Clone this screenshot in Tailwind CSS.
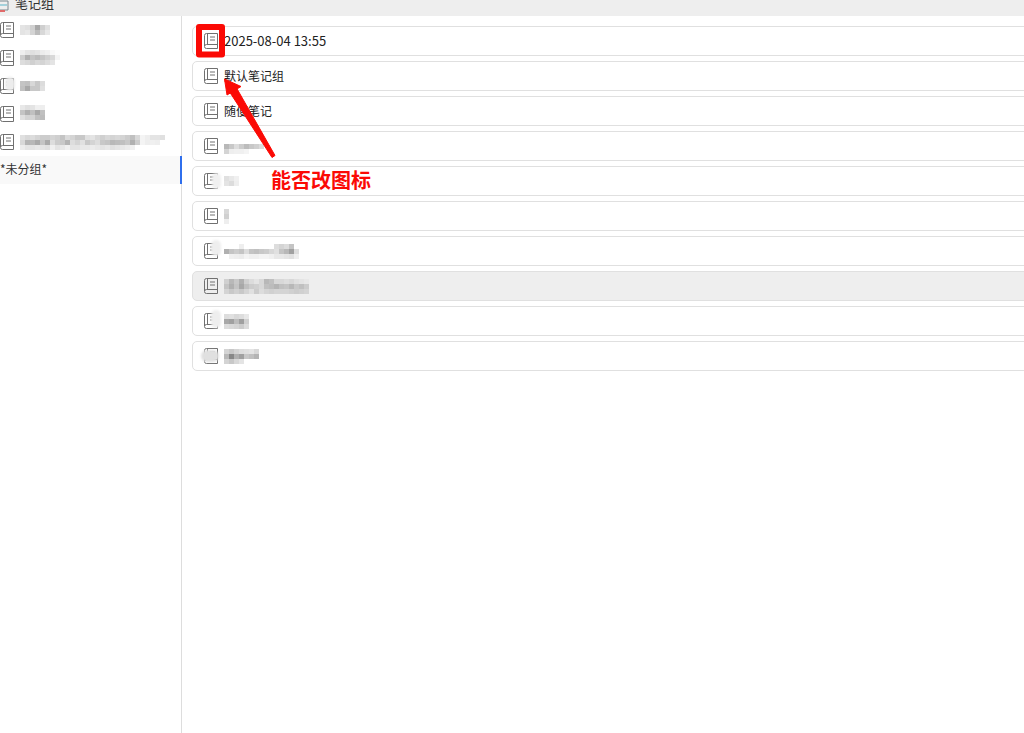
<!DOCTYPE html>
<html lang="zh">
<head>
<meta charset="utf-8">
<script src="https://cdn.jsdelivr.net/npm/@tailwindcss/browser@4"></script>
</head>
<body class="bg-white">
<div class="relative w-[1024px] h-[733px] overflow-hidden flex flex-col bg-white text-[12px] text-[#333] font-['Noto_Sans_CJK_SC','Noto_Sans',sans-serif]">

  <header class="h-4 shrink-0 bg-[#eeeeee] flex items-end overflow-hidden">
    <svg class="w-[9px] h-3 shrink-0 mb-1" viewBox="0 0 9 12" fill="none"><path d="M0 1h8v9H0" stroke="#7a8a90"/><path d="M0 5h7" stroke="#58b5c9"/><path d="M0 11h5" stroke="#e06a6a" stroke-width="2"/></svg>
    <span class="ml-[6px] leading-[20px] h-5 text-[13px] -translate-y-[3px]">笔记组</span>
  </header>

  <div class="flex-1 flex min-h-0">
    <aside class="w-[182px] shrink-0 border-r border-[#dddddd] flex flex-col">
      <div class="h-7 flex items-center gap-[6px]">
        <svg class="w-[14px] h-4 shrink-0" viewBox="0 0 14 16" fill="none" stroke="#707070"><path d="M.5 13V2.500a2 2 0 0 1 2-2h11v15h-11a2 2 0 0 1-2-2 2 2 0 0 1 2-2h11M3.500.5v10.500M6 4h5M6 7h5"/></svg>
        <div class="flex flex-col">
          <div class="flex h-[5px]"><i class="w-[5px] bg-[#e4e4e4]"></i><i class="w-[5px] bg-[#e0e0e0]"></i><i class="w-[5px] bg-[#d0d0d0]"></i><i class="w-[5px] bg-[#a8a8a8]"></i><i class="w-[5px] bg-[#cfcfcf]"></i><i class="w-[5px] bg-[#e0e0e0]"></i></div>
          <div class="flex h-[5px]"><i class="w-[5px] bg-[#e4e4e4]"></i><i class="w-[5px] bg-[#e8e8e8]"></i><i class="w-[5px] bg-[#d4d4d4]"></i><i class="w-[5px] bg-[#bcbcbc]"></i><i class="w-[5px] bg-[#d8d8d8]"></i><i class="w-[5px] bg-[#e8e8e8]"></i></div>
        </div>
      </div>
      <div class="h-7 flex items-center gap-[6px]">
        <svg class="w-[14px] h-4 shrink-0" viewBox="0 0 14 16" fill="none" stroke="#707070"><path d="M.5 13V2.500a2 2 0 0 1 2-2h11v15h-11a2 2 0 0 1-2-2 2 2 0 0 1 2-2h11M3.500.5v10.500M6 4h5M6 7h5"/></svg>
        <div class="flex flex-col -translate-y-px">
          <div class="flex h-[5px]"><i class="w-[5px] bg-[#eeeeee]"></i><i class="w-[5px] bg-[#e4e4e4]"></i><i class="w-[5px] bg-[#e0e0e0]"></i><i class="w-[5px] bg-[#e4e4e4]"></i><i class="w-[5px] bg-[#ececec]"></i><i class="w-[5px] bg-[#f0f0f0]"></i><i class="w-[5px] bg-[#f8f8f8]"></i><i class="w-[5px] bg-[#fcfcfc]"></i></div>
          <div class="flex h-[5px]"><i class="w-[5px] bg-[#cdcdcd]"></i><i class="w-[5px] bg-[#b0b0b0]"></i><i class="w-[5px] bg-[#c4c4c4]"></i><i class="w-[5px] bg-[#bcbcbc]"></i><i class="w-[5px] bg-[#c6c6c6]"></i><i class="w-[5px] bg-[#d0d0d0]"></i><i class="w-[5px] bg-[#d8d8d8]"></i><i class="w-[5px] bg-[#f4f4f4]"></i></div>
          <div class="flex h-[5px]"><i class="w-[5px] bg-[#dddddd]"></i><i class="w-[5px] bg-[#d8d8d8]"></i><i class="w-[5px] bg-[#d0d0d0]"></i><i class="w-[5px] bg-[#d8d8d8]"></i><i class="w-[5px] bg-[#d4d4d4]"></i><i class="w-[5px] bg-[#dcdcdc]"></i><i class="w-[5px] bg-[#e4e4e4]"></i></div>
        </div>
      </div>
      <div class="h-7 flex items-center gap-[6px] relative">
        <svg class="w-[14px] h-4 shrink-0" viewBox="0 0 14 16" fill="none" stroke="#707070"><path d="M.5 13V2.500a2 2 0 0 1 2-2h11v15h-11a2 2 0 0 1-2-2 2 2 0 0 1 2-2h11M3.500.5v10.500M6 4h5M6 7h5"/></svg>
        <div class="absolute left-[5px] top-[5px] w-[10px] h-[14px] bg-[#ececec] rounded-full blur-[1px]"></div>
        <div class="flex flex-col">
          <div class="flex h-[5px]"><i class="w-[5px] bg-[#c4c4c4]"></i><i class="w-[5px] bg-[#c0c0c0]"></i><i class="w-[5px] bg-[#d8d8d8]"></i><i class="w-[5px] bg-[#c8c8c8]"></i><i class="w-[5px] bg-[#dcdcdc]"></i></div>
          <div class="flex h-[5px]"><i class="w-[5px] bg-[#c0c0c0]"></i><i class="w-[5px] bg-[#a8a8a8]"></i><i class="w-[5px] bg-[#c8c8c8]"></i><i class="w-[5px] bg-[#c8c8c8]"></i><i class="w-[5px] bg-[#e0e0e0]"></i></div>
        </div>
      </div>
      <div class="h-7 flex items-center gap-[6px]">
        <svg class="w-[14px] h-4 shrink-0" viewBox="0 0 14 16" fill="none" stroke="#707070"><path d="M.5 13V2.500a2 2 0 0 1 2-2h11v15h-11a2 2 0 0 1-2-2 2 2 0 0 1 2-2h11M3.500.5v10.500M6 4h5M6 7h5"/></svg>
        <div class="flex flex-col -translate-y-[2px]">
          <div class="flex h-[5px]"><i class="w-[5px] bg-[#e8e8e8]"></i><i class="w-[5px] bg-[#e0e0e0]"></i><i class="w-[5px] bg-[#e4e4e4]"></i><i class="w-[5px] bg-[#f0f0f0]"></i><i class="w-[5px] bg-[#eeeeee]"></i></div>
          <div class="flex h-[5px]"><i class="w-[5px] bg-[#c4c4c4]"></i><i class="w-[5px] bg-[#b0b0b0]"></i><i class="w-[5px] bg-[#c0c0c0]"></i><i class="w-[5px] bg-[#a8a8a8]"></i><i class="w-[5px] bg-[#c0c0c0]"></i></div>
          <div class="flex h-[5px]"><i class="w-[5px] bg-[#e0e0e0]"></i><i class="w-[5px] bg-[#d4d4d4]"></i><i class="w-[5px] bg-[#d4d4d4]"></i><i class="w-[5px] bg-[#c0c0c0]"></i><i class="w-[5px] bg-[#bcbcbc]"></i></div>
        </div>
      </div>
      <div class="h-7 flex items-center gap-[6px]">
        <svg class="w-[14px] h-4 shrink-0" viewBox="0 0 14 16" fill="none" stroke="#707070"><path d="M.5 13V2.500a2 2 0 0 1 2-2h11v15h-11a2 2 0 0 1-2-2 2 2 0 0 1 2-2h11M3.500.5v10.500M6 4h5M6 7h5"/></svg>
        <div class="flex flex-col">
          <div class="flex h-[5px]"><i class="w-[5px] bg-[#e0e0e0]"></i><i class="w-[5px] bg-[#d8d8d8]"></i><i class="w-[5px] bg-[#dcdcdc]"></i><i class="w-[5px] bg-[#d4d4d4]"></i><i class="w-[5px] bg-[#cccccc]"></i><i class="w-[5px] bg-[#cccccc]"></i><i class="w-[5px] bg-[#d4d4d4]"></i><i class="w-[5px] bg-[#cfcfcf]"></i><i class="w-[5px] bg-[#c4c4c4]"></i><i class="w-[5px] bg-[#dadada]"></i><i class="w-[5px] bg-[#d4d4d4]"></i><i class="w-[5px] bg-[#c8c8c8]"></i><i class="w-[5px] bg-[#c8c8c8]"></i><i class="w-[5px] bg-[#e0e0e0]"></i><i class="w-[5px] bg-[#e4e4e4]"></i><i class="w-[5px] bg-[#d8d8d8]"></i><i class="w-[5px] bg-[#d0d0d0]"></i><i class="w-[5px] bg-[#d8d8d8]"></i><i class="w-[5px] bg-[#d4d4d4]"></i><i class="w-[5px] bg-[#d8d8d8]"></i><i class="w-[5px] bg-[#d4d4d4]"></i><i class="w-[5px] bg-[#cccccc]"></i><i class="w-[5px] bg-[#c0c0c0]"></i><i class="w-[5px] bg-[#d8d8d8]"></i><i class="w-[5px] bg-[#f4f4f4]"></i><i class="w-[5px] bg-[#eeeeee]"></i><i class="w-[5px] bg-[#e4e4e4]"></i><i class="w-[5px] bg-[#e4e4e4]"></i><i class="w-[5px] bg-[#e0e0e0]"></i></div>
          <div class="flex h-[5px]"><i class="w-[5px] bg-[#d8d8d8]"></i><i class="w-[5px] bg-[#b4b4b4]"></i><i class="w-[5px] bg-[#b8b8b8]"></i><i class="w-[5px] bg-[#aaaaaa]"></i><i class="w-[5px] bg-[#c4c4c4]"></i><i class="w-[5px] bg-[#aaaaaa]"></i><i class="w-[5px] bg-[#dddddd]"></i><i class="w-[5px] bg-[#cccccc]"></i><i class="w-[5px] bg-[#c8c8c8]"></i><i class="w-[5px] bg-[#b4b4b4]"></i><i class="w-[5px] bg-[#dddddd]"></i><i class="w-[5px] bg-[#d4d4d4]"></i><i class="w-[5px] bg-[#e0e0e0]"></i><i class="w-[5px] bg-[#c8c8c8]"></i><i class="w-[5px] bg-[#d4d4d4]"></i><i class="w-[5px] bg-[#dddddd]"></i><i class="w-[5px] bg-[#c8c8c8]"></i><i class="w-[5px] bg-[#c4c4c4]"></i><i class="w-[5px] bg-[#b8b8b8]"></i><i class="w-[5px] bg-[#bcbcbc]"></i><i class="w-[5px] bg-[#c0c0c0]"></i><i class="w-[5px] bg-[#c8c8c8]"></i><i class="w-[5px] bg-[#b0b0b0]"></i><i class="w-[5px] bg-[#cccccc]"></i><i class="w-[5px] bg-[#f4f4f4]"></i><i class="w-[5px] bg-[#eeeeee]"></i><i class="w-[5px] bg-[#f0f0f0]"></i><i class="w-[5px] bg-[#eeeeee]"></i></div>
          <div class="flex h-[5px]"><i class="w-[5px] bg-[#ececec]"></i><i class="w-[5px] bg-[#e4e4e4]"></i><i class="w-[5px] bg-[#e4e4e4]"></i><i class="w-[5px] bg-[#e8e8e8]"></i><i class="w-[5px] bg-[#e4e4e4]"></i><i class="w-[5px] bg-[#e0e0e0]"></i><i class="w-[5px] bg-[#f0f0f0]"></i><i class="w-[5px] bg-[#e4e4e4]"></i><i class="w-[5px] bg-[#e8e8e8]"></i><i class="w-[5px] bg-[#f0f0f0]"></i><i class="w-[5px] bg-[#e4e4e4]"></i><i class="w-[5px] bg-[#e4e4e4]"></i><i class="w-[5px] bg-[#e8e8e8]"></i><i class="w-[5px] bg-[#e8e8e8]"></i><i class="w-[5px] bg-[#ececec]"></i><i class="w-[5px] bg-[#e8e8e8]"></i><i class="w-[5px] bg-[#e4e4e4]"></i><i class="w-[5px] bg-[#e8e8e8]"></i><i class="w-[5px] bg-[#e0e0e0]"></i><i class="w-[5px] bg-[#e4e4e4]"></i><i class="w-[5px] bg-[#e8e8e8]"></i><i class="w-[5px] bg-[#ececec]"></i><i class="w-[5px] bg-[#f0f0f0]"></i></div>
        </div>
      </div>
      <div class="h-7 flex items-center bg-[#f9f9f9] border-r-2 border-[#2f6fed] -mr-px -translate-y-0"><span class="-translate-y-px">*未分组*</span></div>
    </aside>

    <main class="flex-1 min-w-0 pt-[10px] pl-[10px] flex flex-col gap-[5px]">
      <div class="h-[30px] w-[900px] shrink-0 border border-[#e0e0e0] rounded-[5px] flex items-center pl-[11px] gap-[6px] text-[#222]">
        <svg class="w-[14px] h-4 shrink-0" viewBox="0 0 14 16" fill="none" stroke="#707070"><path d="M.5 13V2.500a2 2 0 0 1 2-2h11v15h-11a2 2 0 0 1-2-2 2 2 0 0 1 2-2h11M3.500.5v10.500M6 4h5M6 7h5"/></svg>
        <span class="text-[13px]">2025-08-04 13:55</span>
      </div>
      <div class="h-[30px] w-[900px] shrink-0 border border-[#e0e0e0] rounded-[5px] flex items-center pl-[11px] gap-[6px] text-[#222]">
        <svg class="w-[14px] h-4 shrink-0" viewBox="0 0 14 16" fill="none" stroke="#707070"><path d="M.5 13V2.500a2 2 0 0 1 2-2h11v15h-11a2 2 0 0 1-2-2 2 2 0 0 1 2-2h11M3.500.5v10.500M6 4h5M6 7h5"/></svg>
        <span>默认笔记组</span>
      </div>
      <div class="h-[30px] w-[900px] shrink-0 border border-[#e0e0e0] rounded-[5px] flex items-center pl-[11px] gap-[6px] text-[#222]">
        <svg class="w-[14px] h-4 shrink-0" viewBox="0 0 14 16" fill="none" stroke="#707070"><path d="M.5 13V2.500a2 2 0 0 1 2-2h11v15h-11a2 2 0 0 1-2-2 2 2 0 0 1 2-2h11M3.500.5v10.500M6 4h5M6 7h5"/></svg>
        <span>随便笔记</span>
      </div>
      <div class="h-[30px] w-[900px] shrink-0 border border-[#e0e0e0] rounded-[5px] flex items-center pl-[11px] gap-[6px]">
        <svg class="w-[14px] h-4 shrink-0" viewBox="0 0 14 16" fill="none" stroke="#707070"><path d="M.5 13V2.500a2 2 0 0 1 2-2h11v15h-11a2 2 0 0 1-2-2 2 2 0 0 1 2-2h11M3.500.5v10.500M6 4h5M6 7h5"/></svg>
        <div class="flex flex-col translate-y-[3px]">
          <div class="flex h-[5px]"><i class="w-[5px] bg-[#b8b8b8]"></i><i class="w-[5px] bg-[#c8c8c8]"></i><i class="w-[5px] bg-[#dddddd]"></i><i class="w-[5px] bg-[#cccccc]"></i><i class="w-[5px] bg-[#bcbcbc]"></i><i class="w-[5px] bg-[#c8c8c8]"></i><i class="w-[5px] bg-[#d0d0d0]"></i><i class="w-[5px] bg-[#dcdcdc]"></i></div>
          <div class="flex h-[5px]"><i class="w-[5px] bg-[#d4d4d4]"></i><i class="w-[5px] bg-[#eeeeee]"></i><i class="w-[5px] bg-[#f0f0f0]"></i><i class="w-[5px] bg-[#f0f0f0]"></i><i class="w-[5px] bg-[#f4f4f4]"></i></div>
        </div>
      </div>
      <div class="h-[30px] w-[900px] shrink-0 border border-[#e0e0e0] rounded-[5px] flex items-center pl-[11px] gap-[6px] relative">
        <svg class="w-[14px] h-4 shrink-0" viewBox="0 0 14 16" fill="none" stroke="#707070"><path d="M.5 13V2.500a2 2 0 0 1 2-2h11v15h-11a2 2 0 0 1-2-2 2 2 0 0 1 2-2h11M3.500.5v10.500M6 4h5M6 7h5"/></svg>
        <div class="absolute left-[19px] top-[6px] w-[9px] h-4 bg-[#f0f0f0] rounded-full blur-[1px]"></div>
        <div class="flex flex-col">
          <div class="flex h-[5px]"><i class="w-[5px] bg-[#e0e0e0]"></i><i class="w-[5px] bg-[#e8e8e8]"></i><i class="w-[5px] bg-[#f0f0f0]"></i></div>
          <div class="flex h-[5px]"><i class="w-[5px] bg-[#e4e4e4]"></i><i class="w-[5px] bg-[#dcdcdc]"></i><i class="w-[5px] bg-[#eeeeee]"></i></div>
        </div>
      </div>
      <div class="h-[30px] w-[900px] shrink-0 border border-[#e0e0e0] rounded-[5px] flex items-center pl-[11px] gap-[6px]">
        <svg class="w-[14px] h-4 shrink-0" viewBox="0 0 14 16" fill="none" stroke="#707070"><path d="M.5 13V2.500a2 2 0 0 1 2-2h11v15h-11a2 2 0 0 1-2-2 2 2 0 0 1 2-2h11M3.500.5v10.500M6 4h5M6 7h5"/></svg>
        <div class="flex flex-col">
          <div class="w-[5px] h-[5px] bg-[#d8d8d8]"></div>
          <div class="w-[5px] h-[5px] bg-[#d0d0d0]"></div>
          <div class="w-[5px] h-[5px] bg-[#eeeeee]"></div>
        </div>
      </div>
      <div class="h-[30px] w-[900px] shrink-0 border border-[#e0e0e0] rounded-[5px] flex items-center pl-[11px] gap-[6px] relative">
        <svg class="w-[14px] h-4 shrink-0" viewBox="0 0 14 16" fill="none" stroke="#707070"><path d="M.5 13V2.500a2 2 0 0 1 2-2h11v15h-11a2 2 0 0 1-2-2 2 2 0 0 1 2-2h11M3.500.5v10.500M6 4h5M6 7h5"/></svg>
        <div class="absolute left-[18px] top-[3px] w-[10px] h-4 bg-[#eeeeee] rounded-full blur-[1px]"></div>
        <div class="flex flex-col">
          <div class="flex h-[5px]"><i class="w-[5px]"></i><i class="w-[5px]"></i><i class="w-[5px]"></i><i class="w-[5px] bg-[#eeeeee]"></i><i class="w-[5px]"></i><i class="w-[5px]"></i><i class="w-[5px]"></i><i class="w-[5px]"></i><i class="w-[5px]"></i><i class="w-[5px]"></i><i class="w-[5px] bg-[#dddddd]"></i><i class="w-[5px] bg-[#d4d4d4]"></i><i class="w-[5px] bg-[#dcdcdc]"></i><i class="w-[5px] bg-[#c4c4c4]"></i></div>
          <div class="flex h-[5px]"><i class="w-[5px] bg-[#b0b0b0]"></i><i class="w-[5px] bg-[#c4c4c4]"></i><i class="w-[5px] bg-[#cccccc]"></i><i class="w-[5px] bg-[#c4c4c4]"></i><i class="w-[5px] bg-[#dcdcdc]"></i><i class="w-[5px] bg-[#c4c4c4]"></i><i class="w-[5px] bg-[#c0c0c0]"></i><i class="w-[5px] bg-[#c8c8c8]"></i><i class="w-[5px] bg-[#cccccc]"></i><i class="w-[5px] bg-[#d8d8d8]"></i><i class="w-[5px] bg-[#e0e0e0]"></i><i class="w-[5px] bg-[#c4c4c4]"></i><i class="w-[5px] bg-[#b8b8b8]"></i><i class="w-[5px] bg-[#a0a0a0]"></i><i class="w-[5px] bg-[#dddddd]"></i></div>
          <div class="flex h-[5px]"><i class="w-[5px]"></i><i class="w-[5px] bg-[#f0f0f0]"></i><i class="w-[5px] bg-[#eeeeee]"></i><i class="w-[5px] bg-[#ececec]"></i><i class="w-[5px] bg-[#f4f4f4]"></i><i class="w-[5px] bg-[#f0f0f0]"></i><i class="w-[5px] bg-[#f0f0f0]"></i><i class="w-[5px] bg-[#f4f4f4]"></i><i class="w-[5px] bg-[#f4f4f4]"></i><i class="w-[5px] bg-[#f0f0f0]"></i><i class="w-[5px] bg-[#e8e8e8]"></i><i class="w-[5px] bg-[#e8e8e8]"></i><i class="w-[5px] bg-[#e4e4e4]"></i><i class="w-[5px] bg-[#e0e0e0]"></i><i class="w-[5px] bg-[#eeeeee]"></i></div>
        </div>
      </div>
      <div class="h-[30px] w-[900px] shrink-0 border border-[#e0e0e0] bg-[#eeeeee] rounded-[5px] flex items-center pl-[11px] gap-[6px]">
        <svg class="w-[14px] h-4 shrink-0" viewBox="0 0 14 16" fill="none" stroke="#707070"><path d="M.5 13V2.500a2 2 0 0 1 2-2h11v15h-11a2 2 0 0 1-2-2 2 2 0 0 1 2-2h11M3.500.5v10.500M6 4h5M6 7h5"/></svg>
        <div class="flex flex-col">
          <div class="flex h-[5px]"><i class="w-[5px] bg-[#d0d0d0]"></i><i class="w-[5px] bg-[#b8b8b8]"></i><i class="w-[5px] bg-[#c8c8c8]"></i><i class="w-[5px] bg-[#b0b0b0]"></i><i class="w-[5px] bg-[#d0d0d0]"></i><i class="w-[5px] bg-[#dcdcdc]"></i><i class="w-[5px] bg-[#e4e4e4]"></i><i class="w-[5px] bg-[#d8d8d8]"></i><i class="w-[5px] bg-[#b8b8b8]"></i><i class="w-[5px] bg-[#c0c0c0]"></i><i class="w-[5px] bg-[#d8d8d8]"></i><i class="w-[5px] bg-[#d8d8d8]"></i><i class="w-[5px] bg-[#dddddd]"></i><i class="w-[5px] bg-[#d8d8d8]"></i><i class="w-[5px] bg-[#e0e0e0]"></i><i class="w-[5px] bg-[#e4e4e4]"></i><i class="w-[5px] bg-[#e8e8e8]"></i></div>
          <div class="flex h-[5px]"><i class="w-[5px] bg-[#c4c4c4]"></i><i class="w-[5px] bg-[#b0b0b0]"></i><i class="w-[5px] bg-[#c4c4c4]"></i><i class="w-[5px] bg-[#a8a8a8]"></i><i class="w-[5px] bg-[#c0c0c0]"></i><i class="w-[5px] bg-[#cccccc]"></i><i class="w-[5px] bg-[#d0d0d0]"></i><i class="w-[5px] bg-[#d8d8d8]"></i><i class="w-[5px] bg-[#c0c0c0]"></i><i class="w-[5px] bg-[#bcbcbc]"></i><i class="w-[5px] bg-[#b4b4b4]"></i><i class="w-[5px] bg-[#c0c0c0]"></i><i class="w-[5px] bg-[#c4c4c4]"></i><i class="w-[5px] bg-[#b8b8b8]"></i><i class="w-[5px] bg-[#c8c8c8]"></i><i class="w-[5px] bg-[#c0c0c0]"></i><i class="w-[5px] bg-[#cccccc]"></i></div>
          <div class="flex h-[5px]"><i class="w-[5px] bg-[#d4d4d4]"></i><i class="w-[5px] bg-[#c8c8c8]"></i><i class="w-[5px] bg-[#d0d0d0]"></i><i class="w-[5px] bg-[#c8c8c8]"></i><i class="w-[5px] bg-[#d4d4d4]"></i><i class="w-[5px] bg-[#e0e0e0]"></i><i class="w-[5px] bg-[#cccccc]"></i><i class="w-[5px] bg-[#dcdcdc]"></i><i class="w-[5px] bg-[#d4d4d4]"></i><i class="w-[5px] bg-[#d0d0d0]"></i><i class="w-[5px] bg-[#d4d4d4]"></i><i class="w-[5px] bg-[#d4d4d4]"></i><i class="w-[5px] bg-[#d4d4d4]"></i><i class="w-[5px] bg-[#d0d0d0]"></i><i class="w-[5px] bg-[#cccccc]"></i><i class="w-[5px] bg-[#d0d0d0]"></i><i class="w-[5px] bg-[#d4d4d4]"></i></div>
        </div>
      </div>
      <div class="h-[30px] w-[900px] shrink-0 border border-[#e0e0e0] rounded-[5px] flex items-center pl-[11px] gap-[6px] relative">
        <svg class="w-[14px] h-4 shrink-0" viewBox="0 0 14 16" fill="none" stroke="#707070"><path d="M.5 13V2.500a2 2 0 0 1 2-2h11v15h-11a2 2 0 0 1-2-2 2 2 0 0 1 2-2h11M3.500.5v10.500M6 4h5M6 7h5"/></svg>
        <div class="absolute left-[18px] top-[3px] w-[10px] h-[18px] bg-[#eeeeee] rounded-full blur-[1px]"></div>
        <div class="flex flex-col">
          <div class="flex h-[5px]"><i class="w-[5px] bg-[#dddddd]"></i><i class="w-[5px] bg-[#e0e0e0]"></i><i class="w-[5px] bg-[#d8d8d8]"></i><i class="w-[5px] bg-[#dddddd]"></i><i class="w-[5px] bg-[#e8e8e8]"></i></div>
          <div class="flex h-[5px]"><i class="w-[5px] bg-[#a8a8a8]"></i><i class="w-[5px] bg-[#a0a0a0]"></i><i class="w-[5px] bg-[#bcbcbc]"></i><i class="w-[5px] bg-[#a0a0a0]"></i><i class="w-[5px] bg-[#d0d0d0]"></i></div>
          <div class="flex h-[5px]"><i class="w-[5px] bg-[#dcdcdc]"></i><i class="w-[5px] bg-[#d8d8d8]"></i><i class="w-[5px] bg-[#d4d4d4]"></i><i class="w-[5px] bg-[#cccccc]"></i><i class="w-[5px] bg-[#dcdcdc]"></i></div>
        </div>
      </div>
      <div class="h-[30px] w-[900px] shrink-0 border border-[#e0e0e0] rounded-[5px] flex items-center pl-[11px] gap-[6px] relative">
        <svg class="w-[14px] h-4 shrink-0" viewBox="0 0 14 16" fill="none" stroke="#707070"><path d="M.5 13V2.500a2 2 0 0 1 2-2h11v15h-11a2 2 0 0 1-2-2 2 2 0 0 1 2-2h11M3.500.5v10.500M6 4h5M6 7h5"/></svg>
        <div class="absolute left-[8px] top-[8px] w-[18px] h-3 bg-[#e0e0e0] rounded-full blur-[1px]"></div>
        <div class="flex flex-col">
          <div class="flex h-[5px]"><i class="w-[5px] bg-[#d4d4d4]"></i><i class="w-[5px] bg-[#c8c8c8]"></i><i class="w-[5px] bg-[#d4d4d4]"></i><i class="w-[5px] bg-[#dddddd]"></i><i class="w-[5px] bg-[#e0e0e0]"></i><i class="w-[5px] bg-[#e4e4e4]"></i><i class="w-[5px] bg-[#d8d8d8]"></i></div>
          <div class="flex h-[5px]"><i class="w-[5px] bg-[#b8b8b8]"></i><i class="w-[5px] bg-[#888888]"></i><i class="w-[5px] bg-[#b0b0b0]"></i><i class="w-[5px] bg-[#a0a0a0]"></i><i class="w-[5px] bg-[#c8c8c8]"></i><i class="w-[5px] bg-[#c0c0c0]"></i><i class="w-[5px] bg-[#b4b4b4]"></i></div>
          <div class="flex h-[5px]"><i class="w-[5px] bg-[#d4d4d4]"></i><i class="w-[5px] bg-[#c8c8c8]"></i><i class="w-[5px] bg-[#d8d8d8]"></i><i class="w-[5px] bg-[#e4e4e4]"></i></div>
        </div>
      </div>
    </main>
  </div>

  <svg class="absolute inset-0 w-[1024px] h-[733px] pointer-events-none" viewBox="0 0 1024 733" fill="none">
    <path d="M199 27h23v27.500h-23Z" stroke="#fb0a05" stroke-width="6" stroke-linejoin="round"/>
    <path d="M272 157.500 275 155.500 236 87 229 91Z" fill="#fb0a05" stroke="#fb0a05" stroke-linejoin="round"/>
    <path d="M224.500 79 241 86.500 227 95Z" fill="#fb0a05" stroke="#fb0a05" stroke-linejoin="round"/>
  </svg>
  <div class="absolute left-[271px] top-[166px] text-[20px] leading-[28px] font-bold text-[#fb0a05]">能否改图标</div>
</div>
</body>
</html>
